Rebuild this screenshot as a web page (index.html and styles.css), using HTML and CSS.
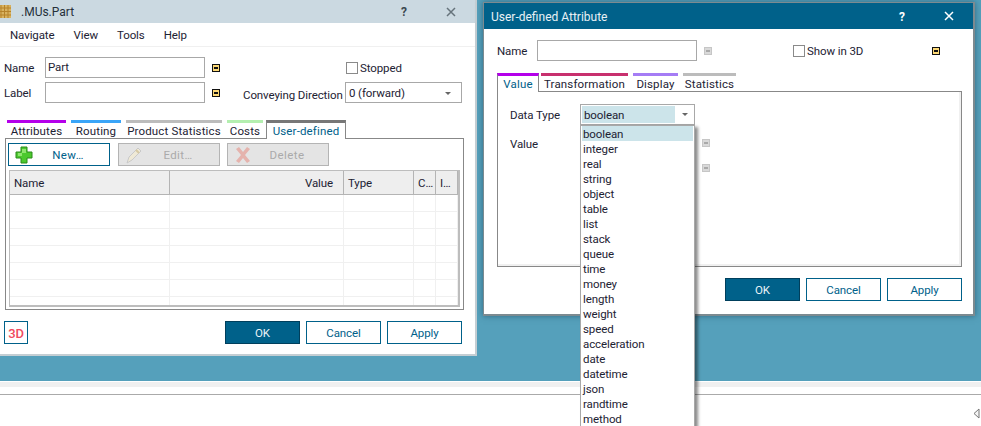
FILE: index.html
```html
<!DOCTYPE html>
<html lang="en">
<head>
<meta charset="utf-8">
<title>.MUs.Part</title>
<link rel="stylesheet" href="styles.css">
</head>
<body>
<main class="desktop">
  <section class="window win-part">
    <header class="title title-idle">
      <svg class="app-icon" width="12" height="13" viewBox="0 0 12 13"><rect width="12" height="13" fill="#d9b25f"/><path d="M0 3h12M0 6.500h12M0 10h12M2 0v13M5.500 0v13M9 0v13" stroke="#b5822a" stroke-width="1"/></svg>
      <span class="title-text">.MUs.Part</span>
      <span class="help help-idle">?</span>
      <svg class="close" width="10" height="10" viewBox="0 0 10 10"><path d="M1 1l8 8M9 1l-8 8" stroke="#66737b" stroke-width="1.500"/></svg>
    </header>
    <nav class="menu"><span>Navigate</span><span>View</span><span>Tools</span><span>Help</span></nav>
    <div class="part-body">
      <div class="part-fields">
        <div class="field-row">
          <label class="lbl lbl-part">Name</label>
          <div class="input input-part">Part</div>
          <i class="mark mark-on"></i>
          <span class="check check-stopped"><i class="box"></i><span class="check-text">Stopped</span></span>
        </div>
        <div class="field-row">
          <label class="lbl lbl-part">Label</label>
          <div class="input input-part"></div>
          <i class="mark mark-on"></i>
          <label class="lbl lbl-conv">Conveying Direction</label>
          <div class="select">0 (forward)<i class="caret"></i></div>
        </div>
      </div>
      <div class="tabs tabs-part">
        <span class="tab t-attr">Attributes</span>
        <span class="tab t-rout">Routing</span>
        <span class="tab t-prod">Product Statistics</span>
        <span class="tab t-cost">Costs</span>
        <span class="tab tab-active t-user">User-defined</span>
      </div>
      <div class="panel panel-part">
        <div class="tools">
          <button class="tool tool-on">
            <svg width="18" height="18" viewBox="0 0 18 18"><path d="M6 1h6v5h5v6h-5v5H6v-5H1V6h5z" fill="#4cc92e" stroke="#2b8a1b" stroke-width="1"/><path d="M7 3h4v4h-4zM3 7h4v3H3z" fill="#8fe56f"/></svg>
            <span>New…</span>
          </button>
          <button class="tool tool-off">
            <svg width="18" height="18" viewBox="0 0 18 18"><path d="M2 17l2-6 9-9 3 3-9 9z" fill="#efe9d6" stroke="#c9c9c9" stroke-width="1"/><path d="M11 4l3 3" stroke="#d6c9a4" stroke-width="2"/></svg>
            <span>Edit…</span>
          </button>
          <button class="tool tool-off">
            <svg width="18" height="18" viewBox="0 0 18 18"><path d="M2 3l3-2 4 5 4-5 3 2-5 6 5 6-3 2-4-5-4 5-3-2 5-6z" fill="#e5b3ad"/></svg>
            <span>Delete</span>
          </button>
        </div>
        <div class="table">
          <div class="thead">
            <span class="c-name">Name</span><span class="c-value">Value</span><span class="c-type">Type</span><span class="c-c">C…</span><span class="c-i">I…</span>
          </div>
          <div class="trow"><span class="c-name"></span><span class="c-value"></span><span class="c-type"></span><span class="c-c"></span><span class="c-i"></span></div>
          <div class="trow"><span class="c-name"></span><span class="c-value"></span><span class="c-type"></span><span class="c-c"></span><span class="c-i"></span></div>
          <div class="trow"><span class="c-name"></span><span class="c-value"></span><span class="c-type"></span><span class="c-c"></span><span class="c-i"></span></div>
          <div class="trow"><span class="c-name"></span><span class="c-value"></span><span class="c-type"></span><span class="c-c"></span><span class="c-i"></span></div>
          <div class="trow"><span class="c-name"></span><span class="c-value"></span><span class="c-type"></span><span class="c-c"></span><span class="c-i"></span></div>
          <div class="trow"><span class="c-name"></span><span class="c-value"></span><span class="c-type"></span><span class="c-c"></span><span class="c-i"></span></div>
          <div class="trow trow-last"><span class="c-name"></span><span class="c-value"></span><span class="c-type"></span><span class="c-c"></span><span class="c-i"></span></div>
        </div>
      </div>
      <footer class="actions actions-part">
        <button class="btn-3d">3D</button>
        <button class="btn btn-primary">OK</button>
        <button class="btn">Cancel</button>
        <button class="btn">Apply</button>
      </footer>
    </div>
  </section>

  <section class="window win-attr">
    <header class="title title-active">
      <span class="title-text">User-defined Attribute</span>
      <span class="help help-active">?</span>
      <svg class="close" width="10" height="10" viewBox="0 0 10 10"><path d="M1 1l8 8M9 1l-8 8" stroke="#ffffff" stroke-width="1.500"/></svg>
    </header>
    <div class="attr-body">
      <div class="field-row attr-name">
        <label class="lbl lbl-attr">Name</label>
        <div class="input input-part"></div>
        <i class="mark mark-off"></i>
        <span class="check check-3d"><i class="box"></i><span class="check-text">Show in 3D</span></span>
        <i class="mark mark-on mark-3d"></i>
      </div>
      <div class="tabs tabs-attr">
        <span class="tab tab-active t-value">Value</span>
        <span class="tab t-trans">Transformation</span>
        <span class="tab t-disp">Display</span>
        <span class="tab t-stat">Statistics</span>
      </div>
      <div class="panel panel-attr">
        <div class="attr-rows">
          <div class="field-row type-row">
            <label class="lbl lbl-type">Data Type</label>
            <div class="combo"><span class="combo-text">boolean</span><i class="caret"></i></div>
          </div>
          <div class="field-row value-row">
            <label class="lbl lbl-type">Value</label>
            <i class="mark mark-off mark-value"></i>
          </div>
          <div class="field-row extra-row"><i class="mark mark-off mark-extra"></i></div>
        </div>
      </div>
      <footer class="actions actions-attr">
        <button class="btn btn-primary">OK</button>
        <button class="btn">Cancel</button>
        <button class="btn">Apply</button>
      </footer>
    </div>
  </section>

  <div class="bottom">
    <div class="strip"></div>
    <div class="console"><svg class="tri" width="7" height="11" viewBox="0 0 7 11"><path d="M6 1v9L1 5.500z" fill="#f4f4f4" stroke="#777" stroke-width="1"/></svg></div>
  </div>

  <ul class="dropdown">
    <li class="selected">boolean</li><li>integer</li><li>real</li><li>string</li><li>object</li><li>table</li><li>list</li><li>stack</li><li>queue</li><li>time</li><li>money</li><li>length</li><li>weight</li><li>speed</li><li>acceleration</li><li>date</li><li>datetime</li><li>json</li><li>randtime</li><li>method</li>
  </ul>
</main>
</body>
</html>
```

FILE: styles.css
```css
* { box-sizing: border-box; }
html, body { margin: 0; height: 100%; }
body { font: 11.500px/15px "Roboto", "Noto Sans", sans-serif; letter-spacing: -.1px; color: #1d2233; overflow: hidden; }
i { display: block; font-style: normal; }
button { font: inherit; letter-spacing: inherit; padding: 2px 0 0; cursor: default; }

.desktop { position: relative; width: 981px; height: 426px; background: #55a0bb; overflow: hidden; }

/* windows */
.window { position: absolute; background: #fff; display: flex; flex-direction: column; }
.win-part { left: 0; top: 0; width: 477px; height: 356px; border-right: 2px solid #c4ced3; border-bottom: 2px solid #c4ced3; }
.win-attr { left: 483px; top: 2px; width: 492px; height: 314px; border: 1px solid #7c8a90; border-width: 1px 2px 2px 1px; box-shadow: 0 0 6px rgba(20, 60, 80, .55); }

.title { display: flex; align-items: center; flex: none; }
.title-idle { height: 23px; background: #cbd9e1; color: #25303a; font-size: 12px; letter-spacing: 0; }
.title-active { height: 26px; background: #00618a; color: #e8f1f5; padding-left: 7px; font-size: 12px; letter-spacing: 0; }
.app-icon { margin: 0 10px 0 -1px; }
.title-text { flex: 1; padding-top: 2px; }
.help { font-weight: 700; font-size: 12px; padding-top: 2px; }
.help-idle { color: #3b4750; margin-right: 39px; }
.help-active { color: #fff; margin-right: 39px; }
.close { flex: none; }
.win-part .close { margin-right: 19px; }
.win-attr .close { margin-right: 19px; }

.menu { display: flex; height: 24px; padding: 2px 0 0 10px; gap: 19px; align-items: center; border-bottom: 1px solid #f0f0f0; flex: none; }

/* shared form bits */
.field-row { display: flex; align-items: center; }
.lbl { flex: none; white-space: nowrap; padding-top: 2px; }
.input { height: 21px; border: 1px solid #a8a8a8; background: #fff; padding: 2px 2px 0; }
.input-part { width: 160px; flex: none; }
.mark { width: 8px; height: 8px; flex: none; margin-left: 7px; border: 1px solid #111; background: #fdd976; position: relative; }
.mark::after { content: ""; position: absolute; left: 1px; right: 1px; top: 2px; height: 2px; background: #111; }
.mark-off { border-color: #c6c6c6; background: #d9d9d9; }
.mark-off::after { background: #a9a9a9; }
.box { width: 12px; height: 12px; border: 1px solid #8a8a8a; background: #fff; flex: none; }
.check { display: flex; align-items: center; gap: 2px; white-space: nowrap; }
.check-text { padding-top: 2px; }
.caret { width: 0; height: 0; border: 3px solid transparent; border-top: 3px solid #666; border-bottom: 0; }

/* part window */
.part-body { flex: 1; padding: 10px 13px 0 4px; display: flex; flex-direction: column; }
.part-fields { display: flex; flex-direction: column; gap: 4px; }
.lbl-part { width: 41px; }
.check-stopped { margin-left: 126px; }
.lbl-conv { margin-left: 23px; width: 102px; padding-top: 6px; }
.select { width: 117px; height: 21px; border: 1px solid #a8a8a8; padding: 2px 3px 0; display: flex; align-items: center; justify-content: space-between; }
.select .caret { margin-right: 7px; }

.tabs { display: flex; }
.tab { height: 18px; border-top: 3px solid; padding-top: 1px; letter-spacing: .15px; text-align: center; display: block; flex: none; white-space: nowrap; }
.tabs-part { margin: 17px 0 0 3px; height: 18px; }
.t-attr { width: 59px; border-color: #b400ea; }
.t-rout { width: 50px; margin-left: 5px; border-color: #3aa5f8; }
.t-prod { width: 96px; margin-left: 5px; border-color: #bcbcbc; }
.t-cost { width: 36px; margin-left: 5px; border-color: #b4efb0; }
.tab-active { background: #fff; color: #00618a; position: relative; z-index: 1; height: 19px; border-left: 1px solid #888; border-right: 1px solid #888; }
.t-user { width: 80px; margin-left: 3px; border-top-color: #777; }

.panel { border: 1px solid #888; background: #fff; }
.panel-part { width: 459px; height: 172px; margin-left: 1px; padding: 4px 2px 2px 2px; display: flex; flex-direction: column; }
.tools { display: flex; gap: 8px; height: 23px; margin-bottom: 4px; }
.tool { width: 102px; height: 23px; display: flex; align-items: center; padding: 0 0 0 6px; border: 1px solid #00618a; background: #fff; color: #00618a; }
.tool span { flex: 1; text-align: center; padding: 2px 6px 0 0; letter-spacing: .4px; }
.tool-off { border-color: #b4b4b4; background: #e4e4e4; color: #aaa; }
.tool-off + .tool-off { margin-left: -1px; }

.table { flex: 1; border: 2px solid #bdbdbd; border-width: 1px 2px 2px 1px; margin: 0 0 0 1px; width: 451px; overflow: hidden; }
.thead, .trow { display: flex; }
.thead { height: 24px; background: #eeeeee; border-bottom: 1px solid #b4b4b4; align-items: stretch; line-height: 25px; }
.thead span { border-right: 1px solid #b4b4b4; padding: 0 4px; flex: none; }
.trow { height: 17px; border-bottom: 1px solid #f0f0f0; }
.trow-last { border-bottom: 0; }
.trow span { border-right: 1px solid #f0f0f0; flex: none; }
.c-name { width: 160px; }
.c-value { width: 174px; text-align: right; padding-right: 10px !important; }
.c-type { width: 70px; }
.c-c { width: 22px; padding: 0 0 0 4px !important; }
.c-i { width: 22px; padding: 0 0 0 4px !important; }

.actions { display: flex; align-items: center; gap: 6px; }
.actions-part { margin-top: 11px; }
.btn { width: 75px; height: 23px; border: 1px solid #00618a; background: #fff; color: #00618a; }
.btn-primary { background: #00618a; color: #eaf3f7; border-color: #003f5c; }
.btn-3d { width: 24px; height: 23px; border: 1px solid #00618a; background: #fff; color: #f04a60; font-weight: 500; font-size: 13px; margin-right: auto; }

/* attribute window */
.attr-body { flex: 1; padding: 11px 11px 0 13px; display: flex; flex-direction: column; }
.lbl-attr { width: 40px; }
.check-3d { margin-left: 81px; }
.mark-3d { margin-left: 69px; }
.tabs-attr { margin-top: 12px; height: 18px; }
.t-value { width: 42px; border-top-color: #b400ea; height: 19px; }
.t-trans { width: 87px; margin-left: 2px; border-color: #c8306e; }
.t-disp { width: 45px; margin-left: 5px; border-color: #a57cf5; }
.t-stat { width: 53px; margin-left: 5px; border-color: #bcbcbc; }
.panel-attr { width: 465px; height: 176px; box-shadow: inset -2px -2px 0 #f0f0f0; padding: 12px 0 0 12px; }
.attr-rows { display: flex; flex-direction: column; }
.type-row { height: 21px; }
.lbl-type { width: 70px; }
.combo { width: 115px; height: 21px; border: 1px solid #a8a8a8; padding: 1px; display: flex; align-items: center; }
.combo-text { width: 93px; height: 17px; background: #cce4ea; padding-left: 2px; line-height: 18px; }
.combo .caret { margin-left: 7px; }
.value-row { height: 15px; margin-top: 10px; }
.value-row .lbl { padding-top: 0; height: 15px; line-height: 19px; }
.mark-value { margin-left: 122px; }
.extra-row { height: 15px; margin-top: 10px; }
.mark-extra { margin-left: 192px; }
.actions-attr { margin-top: 11px; justify-content: flex-end; }

/* open combobox list, floats above the window */
.dropdown { position: absolute; left: 580px; top: 125px; width: 115px; height: 320px; margin: 0; padding: 0 1px; list-style: none; background: #fff; border: 1px solid #a8a8a8; box-shadow: 3px 2px 3px rgba(0, 0, 0, .45); }
.dropdown li { height: 15px; line-height: 17px; padding-left: 1px; }
.dropdown .selected { background: #cce4ea; }

/* bottom of the main window */
.bottom { position: absolute; left: 0; right: 0; top: 381px; bottom: 0; background: #fff; border-top: 1px solid #fff; }
.strip { height: 5px; background: #f0f0f0; }
.console { margin-top: 7px; border-top: 1px solid #aaa; height: 32px; display: flex; justify-content: flex-end; align-items: flex-start; padding: 13px 1px 0 0; }
```
